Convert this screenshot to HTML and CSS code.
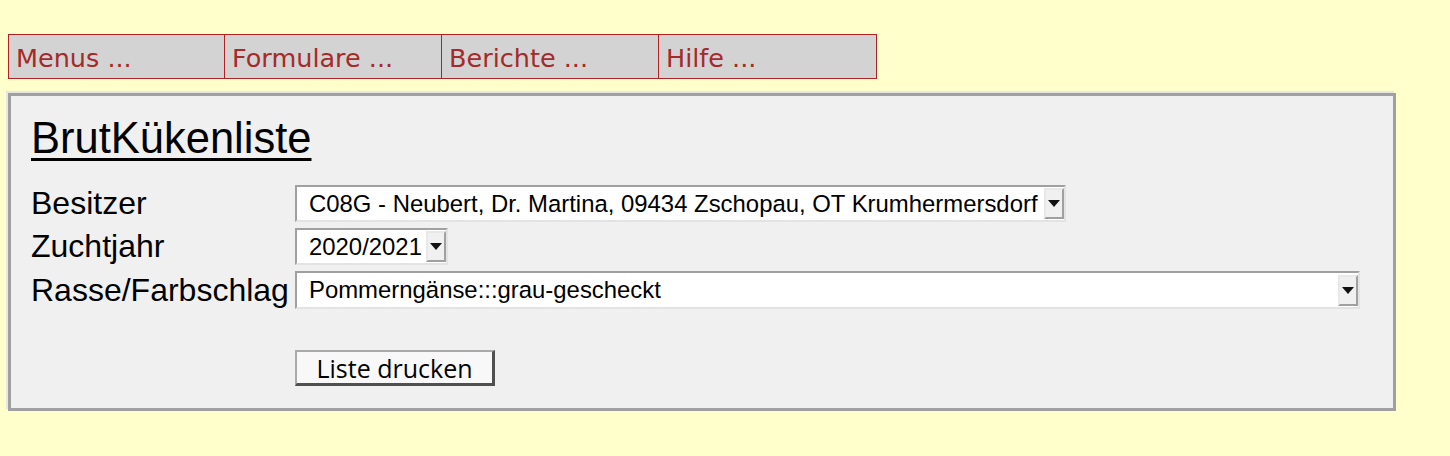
FILE: index.html
```html
<!DOCTYPE html>
<html lang="de">
<head>
<meta charset="utf-8">
<title>BrutKükenliste</title>
<link rel="stylesheet" href="styles.css">
</head>
<body>
<nav class="menubar">
  <div class="menu-item">Menus ...</div>
  <div class="menu-item">Formulare ...</div>
  <div class="menu-item">Berichte ...</div>
  <div class="menu-item last">Hilfe ...</div>
</nav>
<main class="panel">
  <h1 class="title">BrutKükenliste</h1>
  <div class="form">
    <div class="label">Besitzer</div>
    <div class="select sel-besitzer"><span class="sel-text">C08G - Neubert, Dr. Martina, 09434 Zschopau, OT Krumhermersdorf</span><span class="arrow"></span></div>
    <div class="label">Zuchtjahr</div>
    <div class="select sel-jahr"><span class="sel-text">2020/2021</span><span class="arrow"></span></div>
    <div class="label">Rasse/Farbschlag</div>
    <div class="select sel-rasse"><span class="sel-text">Pommerngänse:::grau-gescheckt</span><span class="arrow"></span></div>
    <div class="btn-cell"><button class="btn" type="button">Liste drucken</button></div>
  </div>
</main>
</body>
</html>
```

FILE: styles.css
```css
html, body {
  margin: 0;
  padding: 0;
}
body {
  background: #ffffcc;
  font-family: "Liberation Sans", Arial, sans-serif;
  color: #000;
  height: 456px;
  overflow: hidden;
}
.menubar {
  display: flex;
  margin: 34px 0 0 8px;
  width: 867px;
  border: 1px solid #b22222;
  background: #d3d3d3;
}
.menu-item {
  width: 217px;
  padding: 3px 0 0 7px;
  box-sizing: border-box;
  height: 43px;
  line-height: 40px;
  font-family: "DejaVu Sans", Verdana, sans-serif;
  font-size: 25.5px;
  color: #a52a2a;
  border-right: 1px solid #b22222;
}
.menu-item:first-child {
  width: 216px;
}
.menu-item.last {
  border-right: none;
  width: 217px;
}
.panel {
  margin: 14px 0 0 8px;
  width: 1388px;
  height: 318px;
  box-sizing: border-box;
  border: 3px solid #a0a0a0;
  box-shadow: -2px -2px 0 #e6e6e6;
  background: #f0f0f0;
  padding: 17px 20px 0 20px;
}
.title {
  margin: 0;
  font-size: 43.5px;
  font-weight: normal;
  line-height: 50px;
  text-decoration: underline;
  text-decoration-thickness: 3px;
  text-underline-offset: 5px;
}
.form {
  margin-top: 22px;
  display: grid;
  grid-template-columns: 264px auto;
  row-gap: 6px;
  align-items: center;
  justify-items: start;
}
.label {
  font-size: 32px;
  line-height: 37px;
  white-space: nowrap;
}
.select {
  display: flex;
  align-items: center;
  height: 37px;
  box-sizing: border-box;
  border: 2px solid;
  border-color: #a0a0a0 #e3e3e3 #e3e3e3 #a0a0a0;
  background: #fff;
  font-size: 23.9px;
}
.sel-text {
  flex: 1;
  padding-left: 12px;
  white-space: nowrap;
}
.sel-besitzer { width: 771px; }
.sel-jahr { width: 153px; }
.sel-rasse { width: 1065px; height: 38px; }
.arrow {
  position: relative;
  width: 20px;
  height: 31px;
  box-sizing: border-box;
  background: #f0f0f0;
  border-top: 2px solid #e8e8e8;
  border-left: 2px solid #e8e8e8;
  border-right: 2px solid #a0a0a0;
  border-bottom: 2px solid #a0a0a0;
}
.arrow::after {
  content: "";
  position: absolute;
  left: 2px;
  top: 10px;
  border-left: 6px solid transparent;
  border-right: 6px solid transparent;
  border-top: 7px solid #111;
}
.btn-cell {
  grid-column: 2;
  margin-top: 35px;
}
.btn {
  display: block;
  margin: 0;
  width: 200px;
  height: 36px;
  box-sizing: border-box;
  padding: 0;
  background: #f8f8f8;
  border-style: solid;
  border-width: 2px 3px 3px 2px;
  border-color: #aaaaaa #505050 #505050 #aaaaaa;
  font-family: "Open Sans", sans-serif;
  font-size: 25px;
  line-height: 30px;
  color: #000;
}
```
